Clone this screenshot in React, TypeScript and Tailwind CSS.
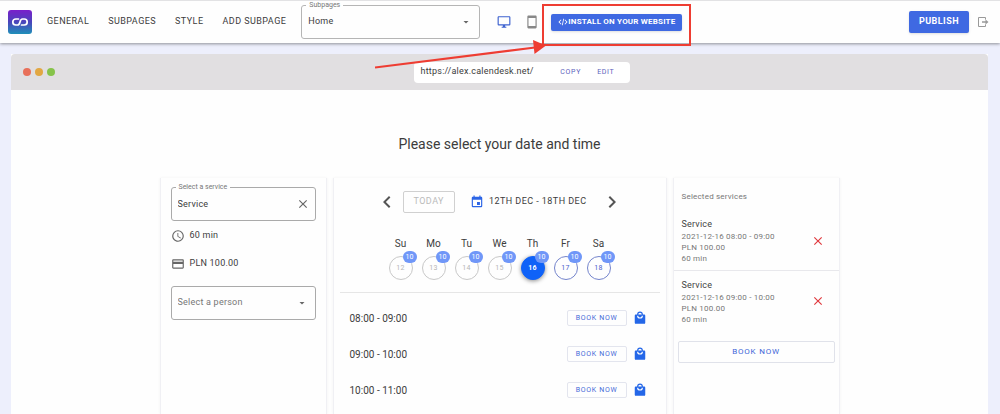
import { useState } from 'react';
import type { ReactNode } from 'react';

const ICONS = {
  monitor:
    'M21,16H3V4H21M21,2H3C1.89,2 1,2.89 1,4V16A2,2 0 0,0 3,18H10V20H8V22H16V20H14V18H21A2,2 0 0,0 23,16V4C23,2.89 22.1,2 21,2Z',
  phone: 'M18,19H6V5H18M18,1H6C4.89,1 4,1.89 4,3V21A2,2 0 0,0 6,23H18A2,2 0 0,0 20,21V3C20,1.89 19.1,1 18,1Z',
  code: 'M15.6,16.6L20.2,12L15.6,7.4L17,6L23,12L17,18L15.6,16.6M8.4,16.6L3.8,12L8.4,7.4L7,6L1,12L7,18L8.4,16.6M12.6,4H14.6L11.4,20H9.4Z',
  calendar:
    'M19,19H5V8H19M16,1V3H8V1H6V3H5C3.89,3 3,3.89 3,5V19A2,2 0 0,0 5,21H19A2,2 0 0,0 21,19V5C21,3.89 20.1,3 19,3H18V1M17,12H12V17H17V12Z',
  bag: 'M12,13A5,5 0 0,1 7,8H9A3,3 0 0,0 12,11A3,3 0 0,0 15,8H17A5,5 0 0,1 12,13M12,3A3,3 0 0,1 15,6H9A3,3 0 0,1 12,3M19,6H17A5,5 0 0,0 12,1A5,5 0 0,0 7,6H5C3.89,6 3,6.89 3,8V20A2,2 0 0,0 5,22H19A2,2 0 0,0 21,20V8C21,6.89 20.1,6 19,6Z',
  clock:
    'M12,20A8,8 0 0,0 20,12A8,8 0 0,0 12,4A8,8 0 0,0 4,12A8,8 0 0,0 12,20M12,2A10,10 0 0,1 22,12A10,10 0 0,1 12,22C6.47,22 2,17.5 2,12A10,10 0 0,1 12,2M12.5,7V12.25L17,14.92L16.25,16.15L11,13V7H12.5Z',
  card: 'M20,8H4V6H20M20,18H4V12H20M20,4H4C2.89,4 2,4.89 2,6V18C2,19.1 2.9,20 4,20H20A2,2 0 0,0 22,18V6C22,4.89 21.1,4 20,4Z',
  close:
    'M19,6.41L17.59,5L12,10.59L6.41,5L5,6.41L10.59,12L5,17.59L6.41,19L12,13.41L17.59,19L19,17.59L13.41,12L19,6.41Z',
  left: 'M15.41,16.58L10.83,12L15.41,7.41L14,6L8,12L14,18L15.41,16.58Z',
  right: 'M8.59,16.58L13.17,12L8.59,7.41L10,6L16,12L10,18L8.59,16.58Z',
  down: 'M7,10L12,15L17,10H7Z',
  exit: 'M4,2H16A2,2 0 0,1 18,4V7H16V4H4V20H16V17H18V20A2,2 0 0,1 16,22H4A2,2 0 0,1 2,20V4A2,2 0 0,1 4,2M10,10.5H17V7L23,12L17,17V13.5H10Z',
};

const NAV = ['General', 'Subpages', 'Style', 'Add subpage'];

const DAYS = [
  { name: 'Su', date: 12 },
  { name: 'Mo', date: 13 },
  { name: 'Tu', date: 14 },
  { name: 'We', date: 15 },
  { name: 'Th', date: 16 },
  { name: 'Fr', date: 17 },
  { name: 'Sa', date: 18 },
];

const SLOTS = ['08:00 - 09:00', '09:00 - 10:00', '10:00 - 11:00'];

const SELECTED = ['2021-12-16 08:00 - 09:00', '2021-12-16 09:00 - 10:00'];

const Icon = ({ name, className }: { name: keyof typeof ICONS; className: string }) => (
  <svg viewBox="0 0 24 24" fill="currentColor" className={`shrink-0 ${className}`} aria-hidden="true">
    <path d={ICONS[name]} />
  </svg>
);

const Logo = () => (
  <svg viewBox="0 0 24 24" className="size-6 shrink-0" role="img" aria-label="Calendesk">
    <defs>
      <linearGradient id="logo" x1="0" y1="0" x2="0" y2="1">
        <stop offset="0" stopColor="#7a1fcb" />
        <stop offset="0.5" stopColor="#4a44bb" />
        <stop offset="1" stopColor="#1f8fb8" />
      </linearGradient>
    </defs>
    <rect width="24" height="24" rx="3" fill="url(#logo)" />
    <path
      d="M10.5 9H7.800a3 3 0 0 0 0 6h1.700c1.400 0 2-.8 2.500-3s1.100-3 2.500-3h1.700a3 3 0 0 1 0 6H13.500"
      fill="none"
      stroke="white"
      strokeWidth="1.7"
      strokeLinecap="round"
    />
  </svg>
);

const Card = ({ children }: { children: ReactNode }) => (
  <section className="border-x border-[#f0f0f4] bg-[#fefefe] shadow-[0_0_3px_rgba(0,0,0,0.05)]">{children}</section>
);

const App = () => {
  const [service, setService] = useState('Service');
  const [activeDay, setActiveDay] = useState(16);

  return (
    <div className="flex min-h-screen flex-col bg-[#edeffc] font-['Roboto',sans-serif] text-[#3c3c3c]">
      {/* Top bar */}
      <header className="relative z-10 flex h-[43px] items-center border-t border-[#e2e2e4] bg-[#fefefe] pr-[11px] pl-2 shadow-[0_1px_3px_rgba(0,0,0,0.4)]">
        <Logo />
        <nav className="ml-[15px] flex gap-[19px]">
          {NAV.map((item) => (
            <button key={item} className="text-[9px] tracking-wider whitespace-nowrap uppercase">
              {item}
            </button>
          ))}
        </nav>

        <div className="relative ml-[15px] w-[179px]">
          <label htmlFor="subpage" className="absolute -top-1 left-[5px] bg-[#fefefe] px-[3px] text-[7px] leading-2 text-[#777]">
            Subpages
          </label>
          <select id="subpage" className="h-[34px] w-full appearance-none rounded-[3px] border border-[#b5b5b5] px-[6px] text-[9px] tracking-wide">
            <option>Home</option>
          </select>
          <Icon name="down" className="pointer-events-none absolute top-[11px] right-2 size-3 text-[#666]" />
        </div>

        <button aria-label="Desktop preview" className="ml-[17px] text-[#3f63d0]">
          <Icon name="monitor" className="size-[14px]" />
        </button>
        <button aria-label="Mobile preview" className="ml-[14px] text-[#888]">
          <Icon name="phone" className="size-[14px]" />
        </button>

        <div className="relative ml-3">
          <button className="flex h-[17px] items-center rounded-[2px] bg-[#3f69e2] px-[7px] text-[8px] font-bold tracking-wide whitespace-nowrap text-white uppercase shadow-sm">
            <Icon name="code" className="size-[10px]" />
            Install on your website
          </button>
          {/* Highlight frame and arrow */}
          <div className="pointer-events-none absolute -inset-x-[9px] -top-[10px] -bottom-[15px] border-2 border-[#ee3d32]">
            <svg viewBox="0 0 172 32" className="absolute top-[33px] -left-[169px] h-8 w-[172px]" aria-hidden="true">
              <path d="M0 28.500L160 8.500" stroke="#ee3d32" strokeWidth="2" />
              <path d="M158 1L171 6.500L159.500 15Z" fill="#ee3d32" />
            </svg>
          </div>
        </div>

        <button className="ml-auto h-[22px] rounded-[2px] bg-[#3f69e2] px-[10px] text-[9px] font-bold tracking-wider text-white uppercase shadow-sm">
          Publish
        </button>
        <button aria-label="Log out" className="ml-2 text-[#999]">
          <Icon name="exit" className="size-3" />
        </button>
      </header>

      {/* Browser frame */}
      <main className="mt-[11px] mr-3 ml-[11px] flex flex-1 flex-col bg-[#fefefe]">
        <div className="flex h-9 items-center gap-3 rounded-t-[4px] bg-[#e1dfe1] px-3">
          <div className="flex gap-1">
            <span className="size-2 rounded-full bg-[#e8705a]" />
            <span className="size-2 rounded-full bg-[#e2a742]" />
            <span className="size-2 rounded-full bg-[#86c34a]" />
          </div>
          <div className="mx-auto flex h-[21px] w-[216px] items-center rounded-[4px] bg-white pr-[15px] pl-[7px]">
            <span className="text-[9px] tracking-wide">https://alex.calendesk.net/</span>
            <button className="ml-auto text-[7px] tracking-widest text-[#5c62bd] uppercase">Copy</button>
            <button className="ml-4 text-[7px] tracking-widest text-[#5c62bd] uppercase">Edit</button>
          </div>
        </div>

        <h1 className="mt-[44px] text-center text-[14px] leading-5">Please select your date and time</h1>

        <div className="mx-auto mt-6 grid w-full max-w-[680px] flex-1 grid-cols-[1fr_2fr_1fr] gap-[6px]">
          {/* Service */}
          <Card>
            <div className="flex flex-col px-[10px] pt-[9px]">
              <div className="relative">
                <label htmlFor="service" className="absolute -top-1 left-[5px] bg-[#fefefe] px-[3px] text-[7px] leading-2 text-[#777]">
                  Select a service
                </label>
                <input
                  id="service"
                  value={service}
                  onChange={(e) => setService(e.target.value)}
                  className="h-[34px] w-full rounded-[3px] border border-[#aaa] px-[6px] text-[9px] tracking-wide"
                />
                <button aria-label="Clear service" onClick={() => setService('')} className="absolute top-[10px] right-[6px] text-[#666]">
                  <Icon name="close" className="size-[14px]" />
                </button>
              </div>
              <p className="mt-[9px] flex h-3 items-center gap-[5px] text-[9px] tracking-wide">
                <Icon name="clock" className="size-[14px] text-[#666]" />
                60 min
              </p>
              <p className="mt-4 flex h-3 items-center gap-[5px] text-[9px] tracking-wide">
                <Icon name="card" className="size-[14px] text-[#666]" />
                PLN 100.00
              </p>
              <div className="relative mt-4">
                <select aria-label="Select a person" className="h-[34px] w-full appearance-none rounded-[3px] border border-[#aaa] px-[6px] text-[9px] tracking-wide text-[#777]">
                  <option>Select a person</option>
                </select>
                <Icon name="down" className="pointer-events-none absolute top-[11px] right-2 size-3 text-[#666]" />
              </div>
            </div>
          </Card>

          {/* Calendar */}
          <Card>
            <div className="flex h-12 items-center justify-center">
              <button aria-label="Previous week" className="text-[#555]">
                <Icon name="left" className="size-6" />
              </button>
              <button className="ml-1 h-[22px] rounded-[2px] border border-[#d0d0d0] px-[10px] text-[9px] tracking-wider text-[#bbb] uppercase">
                Today
              </button>
              <button className="ml-[15px] flex items-center gap-[5px] text-[9px] tracking-wider whitespace-nowrap uppercase">
                <Icon name="calendar" className="size-[14px] text-[#2c65e6]" />
                12th Dec - 18th Dec
              </button>
              <button aria-label="Next week" className="ml-[14px] text-[#555]">
                <Icon name="right" className="size-6" />
              </button>
            </div>

            <div className="mx-[6px] flex justify-center gap-[9px] border-b border-[#e6e6e6] pt-3 pb-3">
              {DAYS.map((day) => (
                <div key={day.name} className="flex flex-col items-center gap-[6px] text-[10px] leading-3">
                  {day.name}
                  <button
                    onClick={() => setActiveDay(day.date)}
                    className={`relative size-6 rounded-full border text-[7px] tracking-wider ${
                      day.date === activeDay
                        ? 'border-[#0f62f8] bg-[#0f62f8] font-bold text-white shadow-[0_1px_4px_rgba(0,0,0,0.45)]'
                        : day.date < 16
                          ? 'border-[#c8c8c8] text-[#b5b5b5]'
                          : 'border-[#7484cc] text-[#4a62cc]'
                    }`}
                  >
                    {day.date}
                    <span className="absolute -top-[6px] -right-[5px] flex h-3 w-[14px] items-center justify-center rounded-full bg-[#7097f8] text-[7px] font-normal tracking-normal text-white">
                      10
                    </span>
                  </button>
                </div>
              ))}
            </div>

            <ul className="mt-[7px] pr-[19px] pl-4">
              {SLOTS.map((slot) => (
                <li key={slot} className="flex h-9 items-center text-[10px]">
                  {slot}
                  <button className="ml-auto h-4 rounded-[2px] border border-[#e3e5ee] px-2 text-[7px] tracking-widest whitespace-nowrap text-[#456ad8] uppercase">
                    Book now
                  </button>
                  <button aria-label={`Add ${slot}`} className="ml-[6px] text-[#2467e8]">
                    <Icon name="bag" className="size-[14px]" />
                  </button>
                </li>
              ))}
            </ul>
          </Card>

          {/* Selected services */}
          <Card>
            <h2 className="px-2 pt-[11px] pb-[6px] text-[8px] leading-4 tracking-wide text-[#777]">Selected services</h2>
            <ul className="divide-y divide-[#e8e8ec]">
              {SELECTED.map((time) => (
                <li key={time} className="flex h-[60px] items-center justify-between pr-[14px] pl-2">
                  <div className="text-[8px] leading-[11px] tracking-wide text-[#777]">
                    <p className="text-[9px] leading-[14px] text-[#444]">Service</p>
                    <p>{time}</p>
                    <p>PLN 100.00</p>
                    <p>60 min</p>
                  </div>
                  <button aria-label="Remove service" className="text-[#e0393e]">
                    <Icon name="close" className="size-[14px]" />
                  </button>
                </li>
              ))}
            </ul>
            <div className="px-1 pt-[6px]">
              <button className="h-[22px] w-full rounded-[2px] border border-[#e0e2ea] text-[8px] tracking-widest text-[#3f66d8] uppercase">
                Book now
              </button>
            </div>
          </Card>
        </div>
      </main>
    </div>
  );
};

export default App;
